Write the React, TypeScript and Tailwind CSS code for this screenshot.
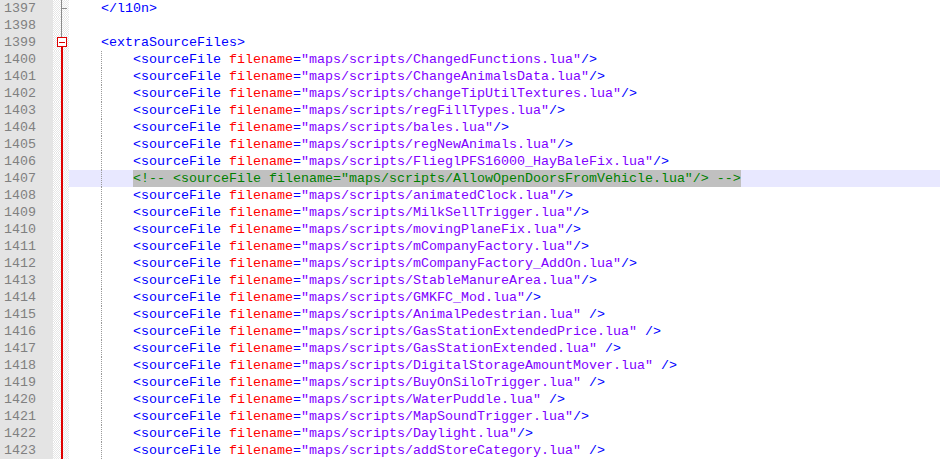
const files: [string, string][] = [
  ["ChangedFunctions.lua", '"/>'],
  ["ChangeAnimalsData.lua", '"/>'],
  ["changeTipUtilTextures.lua", '"/>'],
  ["regFillTypes.lua", '"/>'],
  ["bales.lua", '"/>'],
  ["regNewAnimals.lua", '"/>'],
  ["FlieglPFS16000_HayBaleFix.lua", '"/>'],
  ["__COMMENT__", ""],
  ["animatedClock.lua", '"/>'],
  ["MilkSellTrigger.lua", '"/>'],
  ["movingPlaneFix.lua", '"/>'],
  ["mCompanyFactory.lua", '"/>'],
  ["mCompanyFactory_AddOn.lua", '"/>'],
  ["StableManureArea.lua", '"/>'],
  ["GMKFC_Mod.lua", '"/>'],
  ["AnimalPedestrian.lua", '" />'],
  ["GasStationExtendedPrice.lua", '" />'],
  ["GasStationExtended.lua", '" />'],
  ["DigitalStorageAmountMover.lua", '" />'],
  ["BuyOnSiloTrigger.lua", '" />'],
  ["WaterPuddle.lua", '" />'],
  ["MapSoundTrigger.lua", '"/>'],
  ["Daylight.lua", '"/>'],
  ["addStoreCategory.lua", '" />'],
];

type Fold = "tick" | "gray" | "box" | "red";

// fold margin marks
function FoldMark({ kind }: { kind: Fold }) {
  if (kind === "tick")
    return (
      <div className="flex h-[17px] pl-[8px]">
        <div className="h-full w-[1px] bg-[#8a8a8a]" />
        <div className="mt-[8px] h-[1px] w-[5px] bg-[#8a8a8a]" />
      </div>
    );
  if (kind === "gray")
    return (
      <div className="h-[17px] pl-[8px]">
        <div className="h-full w-[1px] bg-[#8a8a8a]" />
      </div>
    );
  if (kind === "box")
    return (
      <div className="flex h-[17px] flex-col items-start pl-[4px]">
        <div className="ml-[4px] h-[3px] w-[1px] bg-[#8a8a8a]" />
        <div className="flex h-[10px] w-[10px] items-center justify-center border border-[#e00000] bg-white">
          <div className="h-[1px] w-[6px] bg-[#e00000]" />
        </div>
        <div className="ml-[4px] h-[4px] w-[2px] bg-[#e00000]" />
      </div>
    );
  return (
    <div className="h-[17px] pl-[8px]">
      <div className="h-full w-[2px] bg-[#e00000]" />
    </div>
  );
}

function Row({
  num,
  fold,
  active,
  children,
}: {
  num: number;
  fold: Fold;
  active?: boolean;
  children?: React.ReactNode;
}) {
  return (
    <div className="flex h-[17px]">
      <div className="w-[53px] shrink-0 bg-[#e4e4e4] pl-[4px] text-[#808080] leading-[17px]">{num}</div>
      <div className="w-[16px] shrink-0 bg-[repeating-conic-gradient(#e6e6e6_0_25%,#ffffff_0_50%)] bg-size-[2px_2px]">
        <FoldMark kind={fold} />
      </div>
      <div className={`flex flex-1 whitespace-pre leading-[17px] ${active ? "bg-[#e8e8ff]" : "bg-white"}`}>
        {children}
      </div>
    </div>
  );
}

const Indent = () => (
  <>
    <span className="inline-block w-[32px] shrink-0" />
    <span className="inline-block h-[17px] w-[32px] shrink-0 border-l border-dotted border-[#9a9a9a]" />
  </>
);

export default function App() {
  return (
    <div className="h-[460px] w-[940px] overflow-hidden bg-white font-['Liberation_Mono','Courier_New',monospace] text-[13.33px]">
      <Row num={1397} fold="tick">
        <span className="text-[#0000ff]">{"    </l10n>"}</span>
      </Row>
      <Row num={1398} fold="gray" />
      <Row num={1399} fold="box">
        <span className="text-[#0000ff]">{"    <extraSourceFiles>"}</span>
      </Row>
      {files.map(([name, end], i) => {
        const num = 1400 + i;
        if (name === "__COMMENT__") {
          return (
            <Row key={num} num={num} fold="red" active>
              <Indent />
              <span className="bg-[#c0c0c0] text-[#008000]">
                {'<!-- <sourceFile filename="maps/scripts/AllowOpenDoorsFromVehicle.lua"/> -->'}
              </span>
            </Row>
          );
        }
        return (
          <Row key={num} num={num} fold="red">
            <Indent />
            <span className="text-[#0000ff]">{"<sourceFile "}</span>
            <span className="text-[#ff0000]">filename</span>
            <span className="text-[#0000ff]">=</span>
            <span className="text-[#8000ff]">{`"maps/scripts/${name}"`}</span>
            <span className="text-[#0000ff]">{end.slice(1)}</span>
          </Row>
        );
      })}
    </div>
  );
}
